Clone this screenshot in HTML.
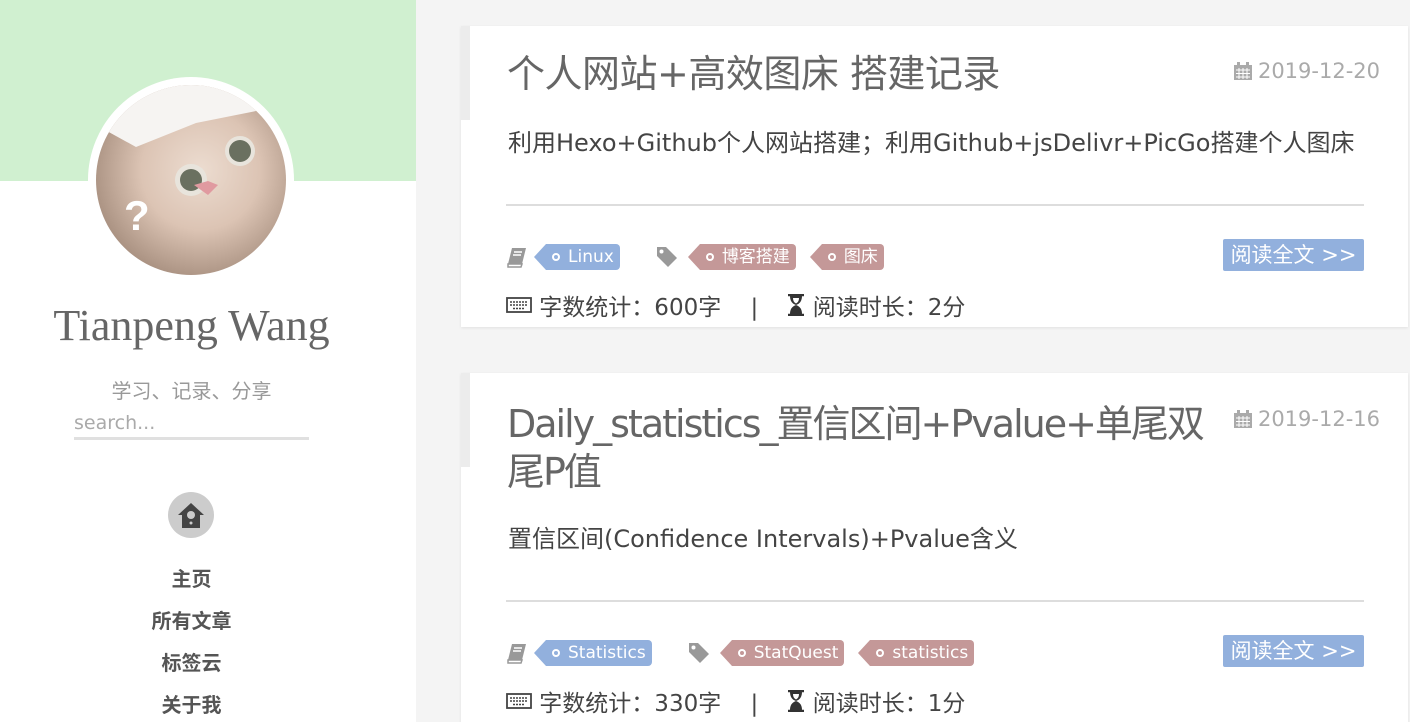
<!DOCTYPE html>
<html><head><meta charset="utf-8"><style>
*{margin:0;padding:0;box-sizing:border-box}
html,body{width:1410px;height:722px;overflow:hidden}
body{background:#f4f4f4;font-family:"Liberation Sans","Noto Sans CJK SC",sans-serif;position:relative}
.side{position:absolute;left:0;top:0;width:416px;height:722px;background:#fff}
.green{position:absolute;left:0;top:0;width:416px;height:181px;background:#d0f0d0}
.av{position:absolute;left:88px;top:77px;width:206px;height:206px;border-radius:50%;background:#fff}
.av .in{position:absolute;left:8px;top:8px;width:190px;height:190px;border-radius:50%;overflow:hidden;background:radial-gradient(circle at 55% 45%,#ecdcd0 0%,#dcc4b4 40%,#a89080 75%,#504840 100%)}
.name{position:absolute;left:0;width:383px;top:300px;text-align:center;font-family:"Liberation Serif",serif;font-size:44px;color:#666}
.motto{position:absolute;left:0;width:383px;top:375px;text-align:center;font-size:20px;color:#999}
.search{position:absolute;left:74px;top:412px;width:235px;height:28px;border-bottom:3px solid #e0e0e0;color:#aaa;font-size:19px;font-family:"DejaVu Sans",sans-serif}
.home{position:absolute;left:168px;top:492px;width:46px;height:46px;border-radius:50%;background:#ccc}
.nav{position:absolute;left:0;width:383px;text-align:center;font-weight:bold;font-size:20px;color:#555}
.card{position:absolute;left:461px;width:947px;background:#fff;box-shadow:0 1px 3px rgba(0,0,0,.08)}
.card .tab{position:absolute;left:0;top:0;width:9px;height:94px;background:#ececec}
.t{position:absolute;left:46px;width:730px;color:#666;font-size:38px;line-height:48px;font-family:"DejaVu Sans","Noto Sans CJK SC",sans-serif;letter-spacing:-0.5px}
.date{position:absolute;right:28px;color:#aaa;font-size:21px;font-family:"DejaVu Sans",sans-serif;display:flex;align-items:center;gap:5px}
.d{position:absolute;left:47px;color:#444;font-size:24px;font-family:"DejaVu Sans","Noto Sans CJK SC",sans-serif}
.hr{position:absolute;left:45px;width:858px;height:2px;background:#ddd}
.row{position:absolute;left:45px;height:28px;display:flex;align-items:center;font-family:"DejaVu Sans","Noto Sans CJK SC",sans-serif}
.tag{position:relative;height:26px;line-height:26px;color:#fff;font-size:17px;padding:0 6px 0 22px;border-radius:0 4px 4px 0;margin-left:12px}
.tag:before{content:"";position:absolute;left:-12px;top:0;border-style:solid;border-width:13px 12px 13px 0;border-color:transparent}
.tag:after{content:"";position:absolute;left:6px;top:9px;width:8px;height:8px;border-radius:50%;border:2px solid #fff;box-sizing:border-box}
.blue{background:#92b0dd}.blue:before{border-right-color:#92b0dd}
.red{background:#c49898}.red:before{border-right-color:#c49898}
.more{position:absolute;right:44px;width:141px;height:32px;background:#92b0dd;color:#fff;font-size:21px;line-height:32px;text-align:center;border-radius:2px;font-family:"DejaVu Sans","Noto Sans CJK SC",sans-serif}
.wc{position:absolute;left:45px;color:#444;font-size:23px;display:flex;align-items:center;font-family:"DejaVu Sans","Noto Sans CJK SC",sans-serif;white-space:pre}
</style></head><body>
<div class="side">
<div class="green"></div>
<div class="av"><div class="in">
<svg width="190" height="190"><path d="M0 0 L190 0 L190 20 L100 38 L40 62 L0 40z" fill="#f6f4f2"/><circle cx="144" cy="66" r="15" fill="#e8e4dc"/><circle cx="144" cy="66" r="11" fill="#6a7060"/><circle cx="95" cy="95" r="16" fill="#e8e4dc"/><circle cx="95" cy="95" r="11" fill="#6a7060"/><path d="M98 100 l14 -4 l10 4 l-10 10z" fill="#e09aa0"/><text x="28" y="145" font-size="42" font-weight="bold" fill="#fff" font-family="Liberation Sans">?</text><path d="M0 150 Q30 170 60 190 L0 190z" fill="#302a28"/></svg>
</div></div>
<div class="name">Tianpeng Wang</div>
<div class="motto">学习、记录、分享</div>
<div class="search">search...</div>
<div class="home"><svg width="46" height="46"><path d="M10 23 L23 11 L36 23 L32 23 L32 36 L14 36 L14 23z" fill="#444"/><circle cx="23" cy="23" r="4" fill="#ccc"/><circle cx="23" cy="31" r="1.5" fill="#ccc"/></svg></div>
<div class="nav" style="top:563px">主页</div>
<div class="nav" style="top:605px">所有文章</div>
<div class="nav" style="top:647px">标签云</div>
<div class="nav" style="top:689px">关于我</div>
</div>

<svg width="0" height="0" style="position:absolute"><defs>
<symbol id="cal" viewBox="0 0 20 20"><rect x="1" y="4" width="18" height="15" fill="#aaa"/><rect x="4" y="1" width="3" height="5" fill="#aaa"/><rect x="13" y="1" width="3" height="5" fill="#aaa"/><path d="M3 9h14M3 12.5h14M3 16h14M6 7v11M10 7v11M14 7v11" stroke="#fff" stroke-width="1"/></symbol>
<symbol id="book" viewBox="0 0 22 22"><path d="M6 2h14l-4 16H2z" fill="#999"/><path d="M2 18h14l-1 3H2z" fill="none" stroke="#999" stroke-width="1.5"/><path d="M8 6h8M7 9h8" stroke="#fff" stroke-width="1.5"/></symbol>
<symbol id="tagi" viewBox="0 0 22 22"><path d="M1 1h9l11 11-9 9L1 10z" fill="#999"/><circle cx="5.5" cy="5.5" r="2" fill="#fff"/></symbol>
<symbol id="kb" viewBox="0 0 26 16"><rect x="1" y="1" width="24" height="14" fill="none" stroke="#444" stroke-width="1.8"/><path d="M4 5h18M4 8h18M7 11.5h12" stroke="#444" stroke-width="1.5" stroke-dasharray="2 1"/></symbol>
<symbol id="hg" viewBox="0 0 18 22"><path d="M1 1h16M1 21h16" stroke="#333" stroke-width="2.5"/><path d="M3 2 Q3 9 9 11 Q15 9 15 2z M3 20 Q3 13 9 11 Q15 13 15 20z" fill="#333"/><path d="M6 4 Q6 8 9 9.5 Q12 8 12 4z" fill="#fff"/></symbol>
</defs></svg>

<div class="card" style="top:26px;height:301px">
<div class="tab"></div>
<div class="t" style="top:24px">个人网站+高效图床 搭建记录</div>
<div class="date" style="top:33px"><svg width="20" height="20"><use href="#cal"/></svg>2019-12-20</div>
<div class="d" style="top:97px">利用Hexo+Github个人网站搭建；利用Github+jsDelivr+PicGo搭建个人图床</div>
<div class="hr" style="top:178px"></div>
<div class="row" style="top:217px"><svg width="22" height="22"><use href="#book"/></svg><span class="tag blue" style="margin-left:18px">Linux</span><svg width="22" height="22" style="margin-left:36px"><use href="#tagi"/></svg><span class="tag red" style="margin-left:22px">博客搭建</span><span class="tag red" style="margin-left:26px">图床</span></div>
<div class="more" style="top:213px">阅读全文 &gt;&gt;</div>
<div class="wc" style="top:262px"><svg width="26" height="16"><use href="#kb"/></svg> 字数统计：600字    |    <svg width="18" height="22"><use href="#hg"/></svg> 阅读时长：2分</div>
</div>

<div class="card" style="top:373px;height:360px">
<div class="tab"></div>
<div class="t" style="top:27px;letter-spacing:-2px;width:710px">Daily_statistics_置信区间+Pvalue+单尾双<br>尾P值</div>
<div class="date" style="top:34px"><svg width="20" height="20"><use href="#cal"/></svg>2019-12-16</div>
<div class="d" style="top:146px">置信区间(Confidence Intervals)+Pvalue含义</div>
<div class="hr" style="top:227px"></div>
<div class="row" style="top:266px"><svg width="22" height="22"><use href="#book"/></svg><span class="tag blue" style="margin-left:18px">Statistics</span><svg width="22" height="22" style="margin-left:36px"><use href="#tagi"/></svg><span class="tag red" style="margin-left:22px">StatQuest</span><span class="tag red" style="margin-left:26px">statistics</span></div>
<div class="more" style="top:262px">阅读全文 &gt;&gt;</div>
<div class="wc" style="top:311px"><svg width="26" height="16"><use href="#kb"/></svg> 字数统计：330字    |    <svg width="18" height="22"><use href="#hg"/></svg> 阅读时长：1分</div>
</div>
</body></html>
